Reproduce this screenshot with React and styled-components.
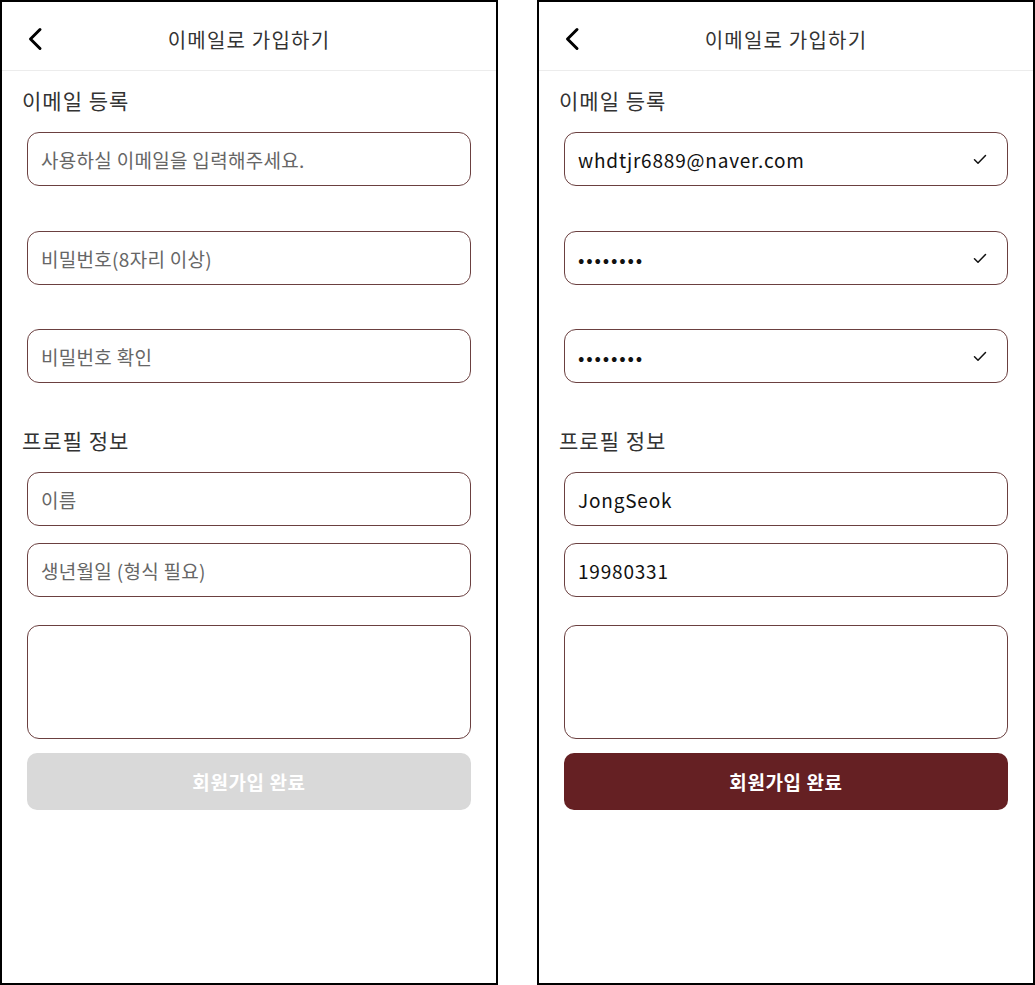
import React from "react";
import styled, { createGlobalStyle } from "styled-components";

const Global = createGlobalStyle`
  html, body { margin: 0; padding: 0; background: #fff; }
  body { font-family: "Noto Sans CJK KR", "Noto Sans", sans-serif; color: #222; }
  * { box-sizing: border-box; }
`;

const Stage = styled.div`
  display: flex;
  gap: 39px;
  width: 1035px;
  height: 985px;
`;

const Frame = styled.section`
  width: 498px;
  height: 985px;
  border: 2px solid #000;
  background: #fff;
  display: flex;
  flex-direction: column;
`;

const Header = styled.header`
  height: 69px;
  padding-top: 6px;
  border-bottom: 1px solid #ececec;
  display: grid;
  grid-template-columns: 60px 1fr 60px;
  align-items: center;
`;

const BackButton = styled.button`
  border: 0;
  background: none;
  padding: 0 0 0 24px;
  display: flex;
  align-items: center;
  height: 100%;
  cursor: pointer;
`;

const Title = styled.h1`
  margin: 0;
  font-size: 20px;
  font-weight: 400;
  color: #333;
  text-align: center;
  letter-spacing: 1.2px;
`;

const Body = styled.div`
  display: flex;
  flex-direction: column;
  padding: 0 25px;
`;

const SectionTitle = styled.h2`
  margin: ${(p) => p.$top}px 0 17px -5px;
  height: 30px;
  line-height: 30px;
  font-size: 21px;
  font-weight: 400;
  color: #333;
  letter-spacing: 1px;
`;

const FieldBox = styled.label`
  display: flex;
  align-items: center;
  height: 54px;
  border: 1.5px solid #6b4040;
  border-radius: 12px;
  padding: 0 20px 0 13px;
  margin-bottom: ${(p) => p.$gap}px;
  background: #fff;
`;

const Input = styled.input`
  flex: 1;
  min-width: 0;
  border: 0;
  outline: none;
  background: transparent;
  font-family: "Noto Sans CJK KR", sans-serif;
  font-size: 19px;
  color: #111;
  padding: 0;
  letter-spacing: ${(p) => (p.type === "password" ? "1.8px" : "0.8px")};
  &::placeholder { color: #666; letter-spacing: 0.3px; }
`;

const TextArea = styled.textarea`
  display: block;
  height: 114px;
  border: 1.5px solid #6b4040;
  border-radius: 12px;
  resize: none;
  outline: none;
  padding: 12px 13px;
  font-family: "Noto Sans CJK KR", sans-serif;
  font-size: 18px;
  margin-bottom: 14px;
`;

const SubmitButton = styled.button`
  height: 57px;
  border: 0;
  border-radius: 10px;
  background: ${(p) => (p.$active ? "#652023" : "#d9d9d9")};
  color: #fff;
  font-family: "Noto Sans CJK KR", sans-serif;
  font-size: 19px;
  font-weight: 700;
  letter-spacing: 0.6px;
`;

const Check = () => (
  <svg width="14" height="11" viewBox="0 0 14 11" fill="none">
    <path d="M1.5 5.8 L5 9.2 L12.5 1.5" stroke="#111" strokeWidth="1.5" strokeLinecap="round" strokeLinejoin="round" />
  </svg>
);

const Chevron = () => (
  <svg width="18" height="24" viewBox="0 0 18 24" fill="none">
    <path d="M14 2.5 L4.5 12 L14 21.5" stroke="#000" strokeWidth="3" strokeLinecap="round" strokeLinejoin="round" />
  </svg>
);

const Field = ({ gap, placeholder, value, type = "text", checked }) => (
  <FieldBox $gap={gap}>
    <Input type={type} placeholder={placeholder} value={value} readOnly />
    {checked && <Check />}
  </FieldBox>
);

const Screen = ({ filled }) => (
  <Frame>
    <Header>
      <BackButton aria-label="back">
        <Chevron />
      </BackButton>
      <Title>이메일로 가입하기</Title>
      <span />
    </Header>
    <Body>
      <SectionTitle $top={14}>이메일 등록</SectionTitle>
      <Field gap={45} placeholder="사용하실 이메일을 입력해주세요." value={filled ? "whdtjr6889@naver.com" : ""} checked={filled} />
      <Field gap={44} type={filled ? "password" : "text"} placeholder="비밀번호(8자리 이상)" value={filled ? "12345678" : ""} checked={filled} />
      <Field gap={0} type={filled ? "password" : "text"} placeholder="비밀번호 확인" value={filled ? "12345678" : ""} checked={filled} />
      <SectionTitle $top={42}>프로필 정보</SectionTitle>
      <Field gap={17} placeholder="이름" value={filled ? "JongSeok" : ""} />
      <Field gap={28} placeholder="생년월일 (형식 필요)" value={filled ? "19980331" : ""} />
      <TextArea readOnly />
      <SubmitButton $active={filled}>회원가입 완료</SubmitButton>
    </Body>
  </Frame>
);

export default function App() {
  return (
    <>
      <Global />
      <Stage>
        <Screen />
        <Screen filled />
      </Stage>
    </>
  );
}
